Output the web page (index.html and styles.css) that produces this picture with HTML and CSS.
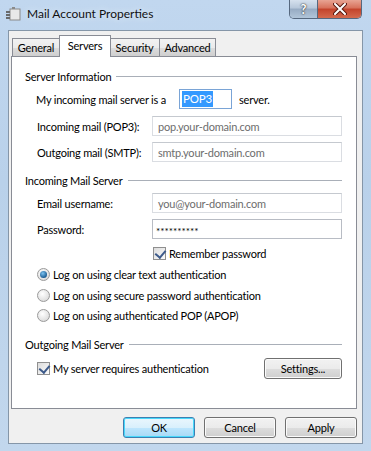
FILE: index.html
```html
<!DOCTYPE html>
<html lang="en">
<head>
  <meta charset="UTF-8" />
  <title>Mail Account Properties</title>
  <link rel="stylesheet" href="styles.css">
</head>
<body>
  <div class="window">
    <!-- title bar -->
    <div class="titlebar">
      <svg class="app-icon" width="16" height="16" viewBox="0 0 16 16">
        <rect x="5" y="3" width="10" height="11" fill="#e8e8e8" stroke="#8a8a8a" />
        <rect x="1" y="5" width="4" height="2" fill="#6a6a6a" />
        <rect x="1" y="8" width="4" height="2" fill="#6a6a6a" />
        <rect x="1" y="11" width="4" height="2" fill="#6a6a6a" />
        <rect x="7" y="1" width="3" height="2" fill="#8a8a8a" />
      </svg>
      <span class="title">Mail Account Properties</span>
      <div class="caption-btns">
        <div class="cap-btn help">?</div>
        <div class="cap-btn close">
          <svg width="14" height="12" viewBox="0 0 14 12">
            <path d="M2 1 L12 11 M12 1 L2 11" stroke="#5a1a10" stroke-width="4" stroke-linecap="round" />
            <path d="M2 1 L12 11 M12 1 L2 11" stroke="#ffffff" stroke-width="2" stroke-linecap="round" />
          </svg>
        </div>
      </div>
    </div>

    <div class="client">
      <div class="tabs">
        <div class="tab t-general">General</div>
        <div class="tab t-servers active">Servers</div>
        <div class="tab t-security">Security</div>
        <div class="tab t-advanced">Advanced</div>
      </div>

      <div class="panel">
        <!-- Server Information -->
        <div class="group-head"><span>Server Information</span><div class="rule"></div></div>
        <div class="row server-type">
          <span>My incoming mail server is a</span>
          <div class="combo"><span class="sel">POP3</span></div>
          <span>server.</span>
        </div>
        <div class="row field gap7">
          <label>Incoming mail (POP3):</label>
          <div class="input dim">pop.your-domain.com</div>
        </div>
        <div class="row field gap6">
          <label>Outgoing mail (SMTP):</label>
          <div class="input dim">smtp.your-domain.com</div>
        </div>

        <!-- Incoming Mail Server -->
        <div class="group-head gap8"><span>Incoming Mail Server</span><div class="rule"></div></div>
        <div class="row field gap3">
          <label>Email username:</label>
          <div class="input dim">you@your-domain.com</div>
        </div>
        <div class="row field gap6">
          <label>Password:</label>
          <div class="input pass">**********</div>
        </div>
        <div class="row check-row remember">
          <span class="checkbox checked"></span>
          <span>Remember password</span>
        </div>
        <div class="row radio-row r1">
          <span class="radio on"></span>
          <span>Log on using clear text authentication</span>
        </div>
        <div class="row radio-row r2">
          <span class="radio"></span>
          <span>Log on using secure password authentication</span>
        </div>
        <div class="row radio-row r3">
          <span class="radio"></span>
          <span>Log on using authenticated POP (APOP)</span>
        </div>

        <!-- Outgoing Mail Server -->
        <div class="group-head gap11"><span>Outgoing Mail Server</span><div class="rule"></div></div>
        <div class="row auth-row">
          <span class="checkbox checked"></span>
          <span class="grow">My server requires authentication</span>
          <button class="btn settings">Settings...</button>
        </div>
      </div>

      <div class="dialog-btns">
        <button class="btn default">OK</button>
        <button class="btn">Cancel</button>
        <button class="btn">Apply</button>
      </div>
    </div>
  </div>
</body>
</html>
```

FILE: styles.css
```css
/* whole page is the dialog window */
* {
  box-sizing: border-box;
}
body {
  margin: 0;
  padding: 0;
  font-family: Lato, "Liberation Sans", sans-serif;
  font-size: 11px;
  letter-spacing: -0.2px;
  color: #000;
  white-space: nowrap;
}

.window {
  width: 371px;
  height: 451px;
  display: flex;
  flex-direction: column;
  background: linear-gradient(180deg, #c1d7ef 0%, #b9d1ea 40%, #c2d7ed 100%);
}

/* title bar */
.titlebar {
  height: 30px;
  flex-shrink: 0;
  display: flex;
  align-items: flex-start;
}
.app-icon {
  margin: 6px 0 0 5px;
}
.title {
  margin: 6px 0 0 6px;
  font-size: 12px;
  letter-spacing: 0;
  color: #111;
  text-shadow: 0 0 6px #eaf2fb;
}
.caption-btns {
  margin-left: auto;
  margin-right: 9px;
  display: flex;
  height: 19px;
  border: 1px solid #56687f;
  border-top: none;
  border-radius: 0 0 5px 5px;
  overflow: hidden;
}
.cap-btn {
  height: 18px;
  display: flex;
  align-items: center;
  justify-content: center;
}
.cap-btn.help {
  width: 28px;
  color: #fff;
  font-weight: bold;
  font-size: 13px;
  text-shadow: 0 0 2px #333, 0 0 1px #333;
  background: linear-gradient(180deg, #d6e1ee 0%, #b7c7da 45%, #97abc3 50%, #b1c5d9 100%);
  border-right: 1px solid #56687f;
}
.cap-btn.close {
  width: 43px;
  background: linear-gradient(180deg, #e8a493 0%, #d7705a 45%, #c3432b 50%, #d46a4e 100%);
}

/* client area */
.client {
  flex: 1;
  margin: 0 8px 7px 8px;
  background: #f0f0f0;
  border: 1px solid #8596a8;
  display: flex;
  flex-direction: column;
  padding: 4px 5px 0 2px;
}

/* tabs */
.tabs {
  display: flex;
  align-items: flex-end;
  height: 21px;
  flex-shrink: 0;
  padding-left: 1px;
  position: relative;
  z-index: 1;
}
.tab {
  height: 18px;
  display: flex;
  align-items: center;
  justify-content: center;
  border: 1px solid #898c95;
  border-bottom: none;
  border-left: none;
  background: linear-gradient(180deg, #f2f2f2 0%, #ebebeb 50%, #dddddd 51%, #cfcfcf 100%);
}
.t-general {
  width: 48px;
  border-left: 1px solid #898c95;
}
.t-security { width: 50px; }
.t-advanced { width: 56px; }
.tab.active {
  width: 52px;
  height: 22px;
  margin: 0 -1px -1px -1px;
  padding-bottom: 3px;
  background: #fff;
  border-left: 1px solid #898c95;
  position: relative;
  z-index: 2;
}

/* tab page */
.panel {
  background: #fff;
  border: 1px solid #898c95;
  height: 353px;
  flex-shrink: 0;
  padding: 9px 14px 0 13px;
  display: flex;
  flex-direction: column;
}

.group-head {
  height: 20px;
  display: flex;
  align-items: center;
  gap: 5px;
}
.group-head .rule {
  flex: 1;
  border-top: 1px solid #a9afb8;
}

.row {
  display: flex;
  align-items: center;
  padding-left: 12px;
}
.server-type {
  height: 20px;
  margin-top: 3px;
  padding-left: 11px;
}
.combo {
  width: 53px;
  height: 20px;
  margin: 0 7px 0 13px;
  border: 1px solid #7aa4d6;
  display: flex;
  align-items: center;
  padding-left: 2px;
}
.combo .sel {
  background: #3399ff;
  color: #fff;
  font-size: 11.5px;
  line-height: 16px;
  padding: 0 1px;
}

.field {
  height: 20px;
}
.field label {
  width: 115px;
}
.input {
  flex: 1;
  height: 20px;
  border: 1px solid #dadde2;
  border-top-color: #c5c9cf;
  display: flex;
  align-items: center;
  padding-left: 5px;
}
.input.dim {
  color: #6d6d6d;
}
.input.pass {
  border-color: #b8bcc4;
  font-size: 10px;
  letter-spacing: 0;
  padding: 4px 0 0 3px;
}

.gap3 { margin-top: 3px; }
.gap6 { margin-top: 6px; }
.gap7 { margin-top: 7px; }
.gap8 { margin-top: 8px; }
.gap11 { margin-top: 11px; }

.check-row, .radio-row {
  height: 16px;
  gap: 3px;
}
.remember {
  margin-top: 6px;
  padding-left: 128px;
}
.r1 { margin-top: 5px; }
.r2 { margin-top: 5px; }
.r3 { margin-top: 4px; }

.checkbox {
  width: 13px;
  height: 13px;
  border: 1px solid #8f8f8f;
  background: linear-gradient(135deg, #dcdcdc 0%, #fbfbfb 100%);
  position: relative;
}
.checkbox.checked::after {
  content: "";
  position: absolute;
  left: 3px;
  top: 0px;
  width: 5px;
  height: 8px;
  border: solid #3d5a8a;
  border-width: 0 2px 2px 0;
  transform: rotate(40deg);
}
.radio {
  width: 13px;
  height: 13px;
  border-radius: 50%;
  border: 1px solid #9a9a9a;
  background: radial-gradient(circle at 40% 35%, #ffffff 0%, #e4e4e4 60%, #cfcfcf 100%);
  position: relative;
}
.radio.on::after {
  content: "";
  position: absolute;
  left: 2px;
  top: 2px;
  width: 7px;
  height: 7px;
  border-radius: 50%;
  background: radial-gradient(circle at 40% 35%, #7cc2f0 0%, #1c5d94 70%, #103c66 100%);
}

.auth-row {
  height: 21px;
  margin-top: 4px;
  gap: 3px;
}
.auth-row .grow {
  flex: 1;
}

/* buttons */
.btn {
  font-family: inherit;
  font-size: 11px;
  letter-spacing: -0.2px;
  color: #000;
  height: 21px;
  border: 1px solid #707070;
  border-radius: 3px;
  background: linear-gradient(180deg, #f2f2f2 0%, #ebebeb 50%, #dddddd 51%, #cfcfcf 100%);
  box-shadow: inset 0 0 0 1px #fbfbfb;
  padding: 0;
}
.btn.settings {
  width: 78px;
}
.btn.default {
  border-color: #3c7fb1;
  box-shadow: inset 0 0 0 1px #48d8fb;
  background: linear-gradient(180deg, #eaf6fd 0%, #d9f0fc 50%, #bee6fd 51%, #a7d9f5 100%);
}

.dialog-btns {
  display: flex;
  justify-content: flex-end;
  gap: 9px;
  margin-top: 8px;
}
.dialog-btns .btn {
  width: 72px;
}
```
